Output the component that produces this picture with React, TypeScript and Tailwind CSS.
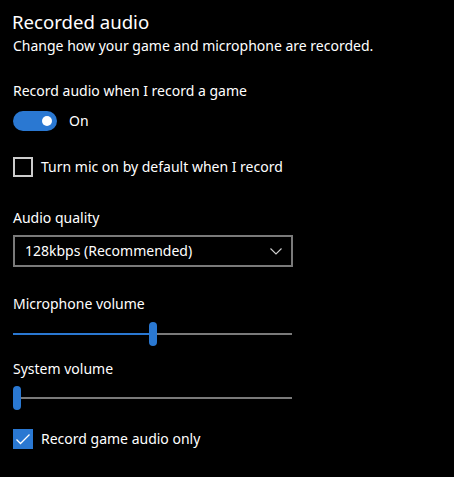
import React from 'react';

const font = { fontFamily: '"Noto Sans", "Open Sans", sans-serif' };

function Toggle() {
  return (
    <div className="flex items-center gap-[12px] mt-[10px] h-[20px]">
      <div className="relative w-[44px] h-[20px] rounded-full bg-[#2a78d2]">
        <div className="absolute right-[5px] top-[5px] w-[10px] h-[10px] rounded-full bg-white" />
      </div>
      <span className="text-[14px] leading-[20px] text-white">On</span>
    </div>
  );
}

function Checkbox({ checked, label, className }: { checked: boolean; label: string; className: string }) {
  return (
    <div className={`flex items-center gap-[8px] h-[20px] ${className}`}>
      {checked ? (
        <div className="w-[20px] h-[20px] bg-[#2a78d2] flex items-center justify-center">
          <svg width="16" height="12" viewBox="0 0 16 12" fill="none">
            <path d="M1.5 6.5 L5.5 10.5 L14.5 1.5" stroke="white" strokeWidth="1.3" />
          </svg>
        </div>
      ) : (
        <div className="w-[20px] h-[20px] border-2 border-[#cccccc]" />
      )}
      <span className="text-[14px] leading-[20px] text-white">{label}</span>
    </div>
  );
}

function Slider({ value, className }: { value: number; className: string }) {
  // track is 279px wide, thumb 8px
  const left = Math.round((279 - 8) * value);
  return (
    <div className={`relative w-[279px] h-[24px] ${className}`}>
      <div className="absolute left-0 right-0 top-[11px] h-[2px] bg-[#7a7a7a]" />
      <div className="absolute left-0 top-[11px] h-[2px] bg-[#2a78d2]" style={{ width: left }} />
      <div className="absolute top-0 w-[8px] h-[24px] rounded-full bg-[#2a78d2]" style={{ left }} />
    </div>
  );
}

export default function App() {
  return (
    <div className="w-[454px] h-[477px] bg-black text-white pl-[13px] pt-[8px] overflow-hidden" style={font}>
      <h2 className="text-[18.6px] leading-[28px] -ml-[1px]">Recorded audio</h2>
      <p className="text-[14px] leading-[20px]">Change how your game and microphone are recorded.</p>

      <div className="mt-[25px] text-[14px] leading-[20px]">Record audio when I record a game</div>
      <Toggle />

      <Checkbox checked={false} label="Turn mic on by default when I record" className="mt-[26px]" />

      <div className="mt-[31px] text-[14px] leading-[20px]">Audio quality</div>
      <div className="mt-[7px] w-[280px] h-[32px] border-2 border-[#7a7a7a] flex items-center justify-between pl-[10px] pr-[9px]">
        <span className="text-[14px] leading-[20px]">128kbps (Recommended)</span>
        <svg width="12" height="7" viewBox="0 0 12 7" fill="none">
          <path d="M0.5 0.5 L6 6 L11.5 0.5" stroke="#d0d0d0" strokeWidth="1.1" />
        </svg>
      </div>

      <div className="mt-[27px] text-[14px] leading-[20px]">Microphone volume</div>
      <Slider value={0.5} className="mt-[8px]" />

      <div className="mt-[13px] text-[14px] leading-[20px]">System volume</div>
      <Slider value={0} className="mt-[7px]" />

      <Checkbox checked={true} label="Record game audio only" className="mt-[19px]" />
    </div>
  );
}
